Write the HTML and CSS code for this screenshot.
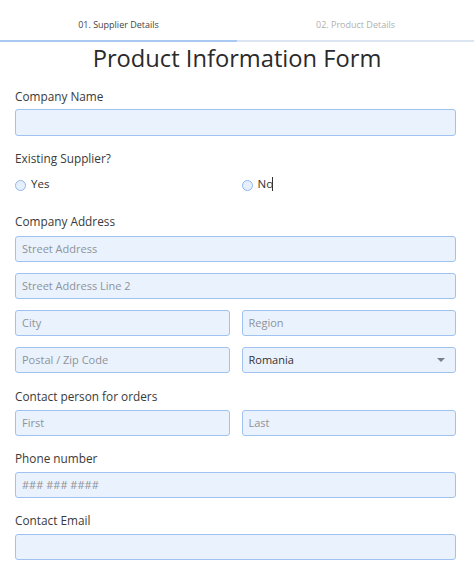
FILE: index.html
```html
<!DOCTYPE html>
<html>
<head>
<meta charset="utf-8">
<link rel="stylesheet" href="styles.css">
</head>
<body>
<div class="tabs">
  <div class="tab active">01. Supplier Details</div>
  <div class="tab">02. Product Details</div>
</div>
<div class="progress"><div class="progress-fill"></div></div>
<h1 class="title">Product Information Form</h1>
<form class="form">
  <div class="field first">
    <div class="label">Company Name</div>
    <div class="input tall"></div>
  </div>
  <div class="field radio-field">
    <div class="label">Existing Supplier?</div>
    <div class="cols radios">
      <div class="radio"><span class="dot"></span><span>Yes</span></div>
      <div class="radio"><span class="dot"></span><span>No</span><span class="caret"></span></div>
    </div>
  </div>
  <div class="field address">
    <div class="label">Company Address</div>
    <div class="stack">
      <div class="input ph">Street Address</div>
      <div class="input ph">Street Address Line 2</div>
      <div class="cols">
        <div class="input ph">City</div>
        <div class="input ph">Region</div>
      </div>
      <div class="cols">
        <div class="input ph">Postal / Zip Code</div>
        <div class="input select">Romania<span class="arrow"></span></div>
      </div>
    </div>
  </div>
  <div class="field contact">
    <div class="label">Contact person for orders</div>
    <div class="cols">
      <div class="input ph">First</div>
      <div class="input ph">Last</div>
    </div>
  </div>
  <div class="field">
    <div class="label">Phone number</div>
    <div class="input ph">### ### ####</div>
  </div>
  <div class="field">
    <div class="label">Contact Email</div>
    <div class="input"></div>
  </div>
</form>
</body>
</html>
```
FILE: styles.css
```css
html, body {
  margin: 0;
  padding: 0;
  background: #ffffff;
  font-family: "Open Sans", "Noto Sans", sans-serif;
  color: #3a3a3a;
}
.tabs {
  display: grid;
  grid-template-columns: 1fr 1fr;
  height: 40px;
  align-items: end;
}
.tab {
  text-align: center;
  font-size: 9px;
  line-height: 14px;
  padding-bottom: 8px;
  color: #b0b0b0;
}
.tab.active {
  color: #444;
}
.progress {
  height: 2px;
  background: #dbe5f2;
}
.progress-fill {
  width: 50%;
  height: 100%;
  background: #a9c9f3;
}
.title {
  margin: 0;
  padding-top: 2px;
  text-align: center;
  font-weight: 400;
  font-size: 23.7px;
  line-height: 28px;
  color: #2a2a2a;
}
.form {
  padding: 0 18px 0 15px;
  margin-top: 1px;
}
.field {
  margin-top: 13px;
}
.field.first {
  margin-top: 15px;
}
.field.contact {
  margin-top: 14px;
}
.label {
  font-size: 11.8px;
  line-height: 18px;
  margin-bottom: 5px;
  color: #3a3a3a;
}
.first .label {
  margin-bottom: 4px;
}
.address .label {
  margin-bottom: 6px;
}
.input {
  box-sizing: border-box;
  height: 26px;
  border: 1px solid #9fc2f0;
  border-radius: 3px;
  background: #eaf2fd;
  font-size: 11px;
  line-height: 24px;
  padding: 0 6px;
  color: #333;
  position: relative;
}
.input.tall {
  height: 27px;
}
.input.ph {
  color: #8e939b;
}
.stack {
  display: flex;
  flex-direction: column;
  gap: 11px;
}
.cols {
  display: grid;
  grid-template-columns: 1fr 1fr;
  column-gap: 12px;
}
.select .arrow {
  position: absolute;
  right: 10px;
  top: 10px;
  width: 0;
  height: 0;
  border-left: 4px solid transparent;
  border-right: 4px solid transparent;
  border-top: 4px solid #7a7f87;
}
.radio-field {
  padding-bottom: 7px;
}
.radios {
  height: 16px;
  margin-top: 9px;
}
.radio {
  display: flex;
  align-items: center;
  font-size: 11.5px;
  line-height: 16px;
  color: #333;
}
.dot {
  box-sizing: border-box;
  width: 11px;
  height: 11px;
  border: 1px solid #8fb6ec;
  border-radius: 50%;
  background: #e6f0fd;
  margin-right: 5px;
  margin-top: 3px;
}
.caret {
  display: inline-block;
  width: 1px;
  height: 14px;
  background: #333;
  margin-left: -1px;
}
```
